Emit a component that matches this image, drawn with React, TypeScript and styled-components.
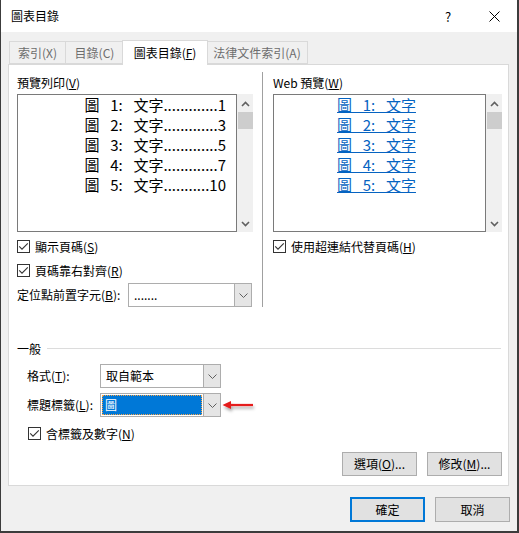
import React from "react";
import styled, { createGlobalStyle } from "styled-components";

const Global = createGlobalStyle`
  html, body { margin: 0; padding: 0; background: #f0f0f0; }
  body {
    font-family: "Noto Sans CJK TC", "Noto Sans", sans-serif;
    font-size: 12px;
    color: #000;
  }
  * { box-sizing: border-box; }
`;

const Dialog = styled.div`
  width: 519px;
  height: 533px;
  display: flex;
  flex-direction: column;
  background: #f0f0f0;
  border-left: 1px solid #3c3c3c;
  border-right: 2px solid #3c3c3c;
  border-bottom: 2px solid #3c3c3c;
`;

const TitleBar = styled.div`
  height: 32px;
  flex: none;
  background: #fff;
  display: flex;
  align-items: center;
  padding-left: 10px;
`;

const TitleText = styled.div`
  flex: 1;
  font-size: 12px;
  line-height: 16px;
`;

const CaptionButton = styled.div`
  width: 46px;
  height: 32px;
  display: flex;
  align-items: center;
  justify-content: center;
  font-size: 13px;
`;

const Body = styled.div`
  flex: 1;
  display: flex;
  flex-direction: column;
  padding: 8px 7px 9px 7px;
`;

const TabRow = styled.div`
  display: flex;
  align-items: flex-end;
  height: 24px;
  padding-left: 1px;
`;

const Tab = styled.div<{ $active?: boolean; $w: number }>`
  position: relative;
  width: ${(p) => p.$w}px;
  height: ${(p) => (p.$active ? 25 : 23)}px;
  margin-bottom: ${(p) => (p.$active ? -1 : 0)}px;
  margin-left: ${(p) => (p.$active ? -2 : -1)}px;
  margin-right: ${(p) => (p.$active ? -1 : 0)}px;
  z-index: ${(p) => (p.$active ? 2 : 1)};
  display: flex;
  align-items: center;
  justify-content: center;
  border: 1px solid #d9d9d9;
  border-bottom: ${(p) => (p.$active ? "none" : "1px solid #d9d9d9")};
  background: ${(p) => (p.$active ? "#fff" : "#f0f0f0")};
  color: ${(p) => (p.$active ? "#000" : "#6d6d6d")};
  white-space: nowrap;
  line-height: 16px;
  &:first-child { margin-left: 0; }
`;

const Panel = styled.div`
  width: 501px;
  flex: 1;
  background: #fff;
  border: 1px solid #d9d9d9;
  display: flex;
  flex-direction: column;
  padding: 10px 6px 9px 8px;
`;

const Columns = styled.div`
  display: flex;
  padding-bottom: 30px;
`;

const Column = styled.div<{ $width: number }>`
  width: ${(p) => p.$width}px;
  display: flex;
  flex-direction: column;
`;

const Separator = styled.div`
  width: 1px;
  background: #a0a0a0;
  margin: -3px 10px 0 9px;
`;

const Label = styled.div`
  line-height: 16px;
  height: 16px;
  white-space: nowrap;
`;

const PreviewArea = styled.div`
  margin-top: 3px;
  height: 138px;
  display: flex;
`;

const ListBox = styled.div<{ $center?: boolean }>`
  flex: 1;
  border: 1px solid #7a7a7a;
  padding: 0 ${(p) => (p.$center ? 0 : 10)}px 0 0;
  display: flex;
  flex-direction: column;
  align-items: ${(p) => (p.$center ? "center" : "flex-end")};
`;

const PrintEntry = styled.div`
  font-size: 15px;
  line-height: 20px;
  height: 20px;
  white-space: pre;
  word-spacing: 2px;
`;

const Leader = styled.span`
  letter-spacing: 0;
`;

const WebEntry = styled.div`
  font-size: 15px;
  line-height: 20px;
  height: 20px;
  color: #0563c1;
  text-decoration: underline;
  white-space: pre;
  word-spacing: 2px;
  margin-right: 6px;
`;

const ScrollBar = styled.div`
  width: 16px;
  background: #f0f0f0;
  display: flex;
  flex-direction: column;
  align-items: center;
  padding-top: 7px;
  padding-bottom: 5px;
`;

const Thumb = styled.div`
  width: 15px;
  height: 17px;
  margin-top: 5px;
  background: #cdcdcd;
`;

const ScrollFill = styled.div`
  flex: 1;
`;

const CheckRow = styled.div<{ $top: number; $indent?: number }>`
  margin-top: ${(p) => p.$top}px;
  margin-left: ${(p) => p.$indent ?? 0}px;
  height: 16px;
  display: flex;
  align-items: center;
  gap: 5px;
  white-space: nowrap;
`;

const CheckBox = styled.div`
  width: 13px;
  height: 13px;
  border: 1px solid #333;
  background: #fff;
  display: flex;
  align-items: center;
  justify-content: center;
`;

const FieldRow = styled.div<{ $top: number; $indent?: number }>`
  margin-top: ${(p) => p.$top}px;
  margin-left: ${(p) => p.$indent ?? 0}px;
  display: flex;
  align-items: center;
`;

const FieldLabel = styled.div<{ $width: number }>`
  width: ${(p) => p.$width}px;
  line-height: 16px;
  white-space: nowrap;
`;

const Combo = styled.div<{ $width: number }>`
  width: ${(p) => p.$width}px;
  height: 24px;
  border: 1px solid #adadad;
  display: flex;
  background: #fff;
`;

const ComboField = styled.div`
  flex: 1;
  padding: 1px;
  display: flex;
`;

const ComboText = styled.div<{ $selected?: boolean }>`
  flex: 1;
  padding-left: ${(p) => (p.$selected ? 2 : 3)}px;
  line-height: 18px;
  background: ${(p) => (p.$selected ? "#0078d7" : "transparent")};
  color: ${(p) => (p.$selected ? "#fff" : "#000")};
  border: 1px ${(p) => (p.$selected ? "dotted #f7a54a" : "solid transparent")};
`;

const DropButton = styled.div`
  width: 17px;
  background: #e5e5e5;
  border-left: 1px solid #adadad;
  display: flex;
  align-items: center;
  justify-content: center;
`;

const GroupHeader = styled.div`
  margin-top: 3px;
  height: 16px;
  display: flex;
  align-items: center;
`;

const GroupLine = styled.div`
  flex: 1;
  height: 1px;
  background: #dcdcdc;
  margin-left: 6px;
  margin-right: 1px;
`;

const ButtonRow = styled.div<{ $gap: number }>`
  margin-top: auto;
  display: flex;
  justify-content: flex-end;
  gap: ${(p) => p.$gap}px;
`;

const Footer = styled.div`
  margin-top: 11px;
  display: flex;
  justify-content: flex-end;
  gap: 10px;
`;

const Button = styled.div<{ $default?: boolean; $height: number; $width: number }>`
  width: ${(p) => p.$width}px;
  height: ${(p) => p.$height}px;
  background: #e1e1e1;
  border: ${(p) => (p.$default ? "2px solid #0078d7" : "1px solid #adadad")};
  display: flex;
  align-items: center;
  justify-content: center;
  line-height: 16px;
  white-space: nowrap;
`;

const Arrow = styled.svg`
  margin-left: 1px;
  overflow: visible;
`;

const CheckMark = () => (
  <svg width="11" height="11" viewBox="0 0 11 11">
    <path d="M1.2 5.3 L4 8.1 L9.8 2.3" fill="none" stroke="#333" strokeWidth="1.1" />
  </svg>
);

const ChevronDown = () => (
  <svg width="9" height="5" viewBox="0 0 9 5">
    <path d="M0.5 0.5 L4.5 4.5 L8.5 0.5" fill="none" stroke="#606060" strokeWidth="1" />
  </svg>
);

const ScrollChevron = ({ up }: { up?: boolean }) => (
  <svg width="9" height="6" viewBox="0 0 9 6">
    <path
      d={up ? "M1 5 L4.5 1.5 L8 5" : "M1 1 L4.5 4.5 L8 1"}
      fill="none"
      stroke="#606060"
      strokeWidth="1.6"
    />
  </svg>
);

const Scroll = () => (
  <ScrollBar>
    <ScrollChevron up />
    <Thumb />
    <ScrollFill />
    <ScrollChevron />
  </ScrollBar>
);

const Check = ({ children, top, indent }: { children: React.ReactNode; top: number; indent?: number }) => (
  <CheckRow $top={top} $indent={indent}>
    <CheckBox>
      <CheckMark />
    </CheckBox>
    <span>{children}</span>
  </CheckRow>
);

const entries = [
  ["1", "1"],
  ["2", "3"],
  ["3", "5"],
  ["4", "7"],
  ["5", "10"],
];

export default function App() {
  return (
    <>
      <Global />
      <Dialog>
        <TitleBar>
          <TitleText>圖表目錄</TitleText>
          <CaptionButton>?</CaptionButton>
          <CaptionButton>
            <svg width="11" height="11" viewBox="0 0 11 11">
              <path d="M0.5 0.5 L10.5 10.5 M10.5 0.5 L0.5 10.5" stroke="#000" strokeWidth="1" />
            </svg>
          </CaptionButton>
        </TitleBar>
        <Body>
          <TabRow>
            <Tab $w={57}>索引(X)</Tab>
            <Tab $w={59}>目錄(C)</Tab>
            <Tab $active $w={86}>
              圖表目錄(<u>F</u>)
            </Tab>
            <Tab $w={102}>法律文件索引(A)</Tab>
          </TabRow>
          <Panel>
            <Columns>
              <Column $width={236}>
                <Label>
                  預覽列印(<u>V</u>)
                </Label>
                <PreviewArea>
                  <ListBox>
                    {entries.map(([n, p]) => (
                      <PrintEntry key={n}>
                        {`圖  ${n}:  文字`}
                        <Leader>{p.length > 1 ? "..........." : "............."}</Leader>
                        {p}
                      </PrintEntry>
                    ))}
                  </ListBox>
                  <Scroll />
                </PreviewArea>
                <Check top={6}>
                  顯示頁碼(<u>S</u>)
                </Check>
                <Check top={8}>
                  頁碼靠右對齊(<u>R</u>)
                </Check>
                <FieldRow $top={5}>
                  <FieldLabel $width={111}>
                    定位點前置字元(<u>B</u>):
                  </FieldLabel>
                  <Combo $width={124}>
                    <ComboField>
                      <ComboText>.......</ComboText>
                    </ComboField>
                    <DropButton>
                      <ChevronDown />
                    </DropButton>
                  </Combo>
                </FieldRow>
              </Column>
              <Separator />
              <Column $width={229}>
                <Label>
                  Web 預覽(<u>W</u>)
                </Label>
                <PreviewArea>
                  <ListBox $center>
                    {entries.map(([n]) => (
                      <WebEntry key={n}>{`圖  ${n}:  文字`}</WebEntry>
                    ))}
                  </ListBox>
                  <Scroll />
                </PreviewArea>
                <Check top={6}>
                  使用超連結代替頁碼(<u>H</u>)
                </Check>
              </Column>
            </Columns>
            <GroupHeader>
              <span>一般</span>
              <GroupLine />
            </GroupHeader>
            <FieldRow $top={8} $indent={10}>
              <FieldLabel $width={73}>
                格式(<u>T</u>):
              </FieldLabel>
              <Combo $width={121}>
                <ComboField>
                  <ComboText>取自範本</ComboText>
                </ComboField>
                <DropButton>
                  <ChevronDown />
                </DropButton>
              </Combo>
            </FieldRow>
            <FieldRow $top={5} $indent={10}>
              <FieldLabel $width={73}>
                標題標籤(<u>L</u>):
              </FieldLabel>
              <Combo $width={121}>
                <ComboField>
                  <ComboText $selected>圖</ComboText>
                </ComboField>
                <DropButton>
                  <ChevronDown />
                </DropButton>
              </Combo>
              <Arrow width="32" height="12" viewBox="0 0 32 12">
                <defs>
                  <filter id="sh" x="-20%" y="-50%" width="140%" height="250%">
                    <feDropShadow dx="1" dy="2.5" stdDeviation="1.4" floodColor="#000" floodOpacity="0.35" />
                  </filter>
                </defs>
                <g filter="url(#sh)">
                  <path d="M7 6 L31 6" stroke="#e51a1a" strokeWidth="2.2" />
                  <path d="M0.5 6 L9 2 L9 10 Z" fill="#e51a1a" />
                </g>
              </Arrow>
            </FieldRow>
            <Check top={8} indent={11}>
              含標籤及數字(<u>N</u>)
            </Check>
            <ButtonRow $gap={10}>
              <Button $height={24} $width={75}>
                選項(<u>O</u>)...
              </Button>
              <Button $height={24} $width={75}>
                修改(<u>M</u>)...
              </Button>
            </ButtonRow>
          </Panel>
          <Footer>
            <Button $default $height={25} $width={75}>
              確定
            </Button>
            <Button $height={25} $width={75}>
              取消
            </Button>
          </Footer>
        </Body>
      </Dialog>
    </>
  );
}
